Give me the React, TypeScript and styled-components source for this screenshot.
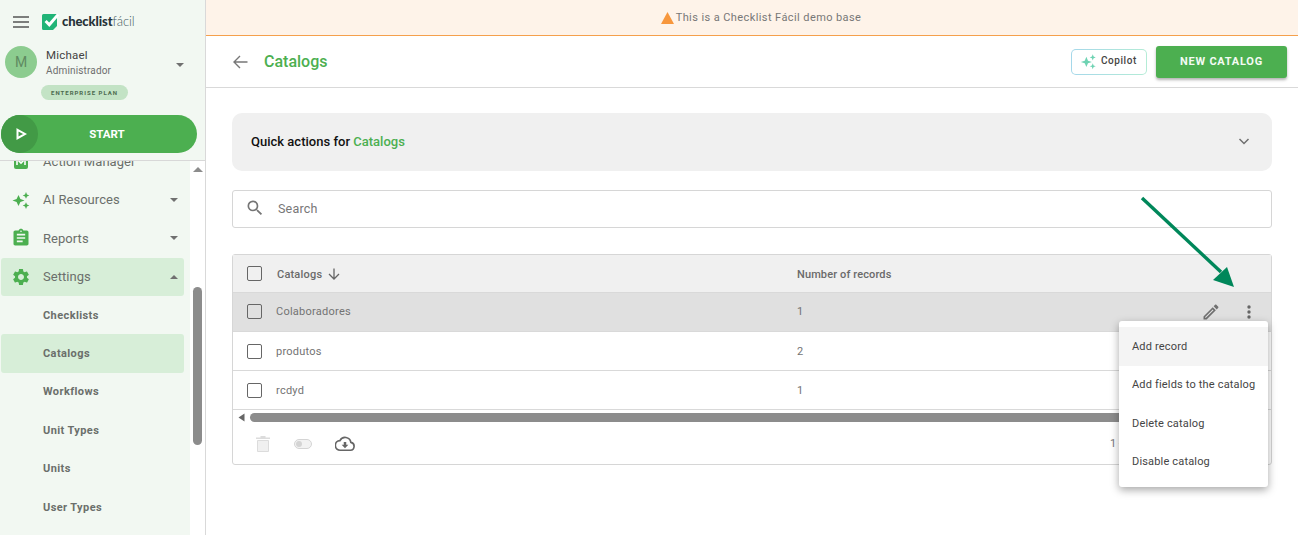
import React from "react";
import styled, { createGlobalStyle } from "styled-components";

const Global = createGlobalStyle`
  html, body { margin: 0; padding: 0; height: 100%; overflow: hidden; background: #fff; }
  body { font-family: Roboto, "Liberation Sans", sans-serif; }
  #root { height: 535px; }
  * { box-sizing: border-box; }
`;

const Page = styled.div`
  position: relative;
  display: flex;
  width: 1298px;
  height: 535px;
  overflow: hidden;
`;

const Sidebar = styled.aside`
  width: 206px;
  height: 535px;
  flex: none;
  display: flex;
  flex-direction: column;
  background: #f2f8f2;
  border-right: 1px solid #d9d9d9;
`;

const SideTop = styled.div`
  height: 161px;
  flex: none;
  border-bottom: 1px solid #d8d8d8;
  display: flex;
  flex-direction: column;
`;

const LogoRow = styled.div`
  height: 40px;
  display: flex;
  align-items: center;
  padding: 3px 0 0 13px;
`;

const Burger = styled.svg`
  width: 16px;
  height: 12px;
  margin-right: 12px;
`;

const LogoText = styled.span`
  margin: -2px 0 0 2px;
  font-family: Lato, sans-serif;
  font-size: 13px;
  font-weight: 900;
  color: #263238;
  letter-spacing: -0.1px;
  b { font-weight: 300; color: #455a64; }
`;

const UserRow = styled.div`
  display: flex;
  align-items: center;
  height: 40px;
  padding: 0 0 0 5px;
  margin-top: 3px;
`;

const Avatar = styled.div`
  width: 32px;
  height: 32px;
  border-radius: 50%;
  background: #8ccc8f;
  color: #5f8a61;
  font-size: 14px;
  display: flex;
  align-items: center;
  justify-content: center;
  margin-right: 9px;
  margin-top: -2px;
`;

const UserText = styled.div`
  flex: 1;
  display: flex;
  flex-direction: column;
  gap: 1px;
`;

const UserName = styled.div`
  font-size: 11.5px;
  line-height: 15px;
  color: #444;
  letter-spacing: 0.2px;
`;

const UserRole = styled.div`
  font-size: 10px;
  line-height: 14px;
  color: #6e6e6e;
  letter-spacing: 0.15px;
`;

const Caret = styled.span<{ $up?: boolean }>`
  width: 0;
  height: 0;
  border-left: 4px solid transparent;
  border-right: 4px solid transparent;
  ${(p) => (p.$up ? "border-bottom: 4px solid #707070;" : "border-top: 4px solid #707070;")}
`;

const UserCaret = styled(Caret)`
  margin: 3px 21px 0 0;
`;

const Plan = styled.div`
  align-self: flex-start;
  margin: 2px 0 0 41px;
  height: 15px;
  width: 87px;
  border-radius: 8px;
  background: #c3e3c5;
  color: #4c6a4e;
  font-size: 6px;
  font-weight: 700;
  letter-spacing: 1px;
  display: flex;
  align-items: center;
  justify-content: center;
`;

const Start = styled.div`
  margin: 15px 0 0 1px;
  width: 196px;
  height: 38px;
  border-radius: 19px;
  background: #4caf50;
  display: flex;
  align-items: center;
  color: #fff;
  font-size: 11.5px;
  font-weight: 700;
`;

const StartCircle = styled.div`
  width: 37px;
  height: 38px;
  border-radius: 50%;
  background: #429a46;
  display: flex;
  align-items: center;
  justify-content: center;
  padding-left: 2px;
`;

const StartLabel = styled.div`
  flex: 1;
  text-align: center;
  padding-right: 21px;
`;

const SideBody = styled.div`
  flex: 1;
  min-height: 0;
  display: flex;
`;

const NavClip = styled.div`
  width: 190px;
  overflow: hidden;
`;

const NavList = styled.nav`
  margin-top: -18.6px;
  display: flex;
  flex-direction: column;
`;

const NavItem = styled.div<{ $active?: boolean; $sub?: boolean }>`
  height: 38.4px;
  margin: 0 6px 0 1px;
  padding: 0 6px 0 10px;
  display: flex;
  align-items: center;
  border-radius: 3px;
  color: #6b6f6b;
  font-size: ${(p) => (p.$sub ? "11px" : "13px")};
  font-weight: ${(p) => (p.$sub ? 700 : 400)};
  letter-spacing: ${(p) => (p.$sub ? "0.4px" : "0.05px")};
  background: ${(p) => (p.$active ? "#d7eed8" : "transparent")};
  ${(p) => p.$sub && "padding-left: 42px;"}
`;

const NavIcon = styled.svg`
  width: 20px;
  height: 20px;
  margin-right: 12px;
  flex: none;
`;

const NavLabel = styled.span`
  flex: 1;
`;

const SideScroll = styled.div`
  width: 15px;
  background: #fff;
  display: flex;
  flex-direction: column;
  align-items: center;
  padding-top: 6px;
`;

const ScrollUp = styled.span`
  width: 0;
  height: 0;
  border-left: 5px solid transparent;
  border-right: 5px solid transparent;
  border-bottom: 5px solid #8c8c8c;
`;

const Thumb = styled.div`
  width: 9px;
  height: 158px;
  margin: 115px 0 0 0;
  border-radius: 5px;
  background: #8c8c8c;
`;

const Main = styled.main`
  flex: 1;
  min-width: 0;
  display: flex;
  flex-direction: column;
`;

const Banner = styled.div`
  height: 36px;
  background: #fef3e9;
  border-bottom: 1px solid #f5a04c;
  display: flex;
  align-items: center;
  justify-content: center;
  gap: 2px;
  color: #777;
  font-size: 11px;
  letter-spacing: 0.41px;
  padding-left: 18px;
`;

const Header = styled.header`
  height: 52px;
  border-bottom: 1px solid #d9d9d9;
  display: flex;
  align-items: center;
  padding: 0 11px 0 26px;
`;

const Title = styled.h1`
  margin: 0 0 0 15px;
  flex: 1;
  font-size: 16px;
  font-weight: 500;
  color: #4caf50;
`;

const Copilot = styled.div`
  width: 76px;
  height: 26px;
  margin-right: 9px;
  border-radius: 5px;
  border: 1px solid transparent;
  background: linear-gradient(#fff, #fff) padding-box, linear-gradient(90deg, #a5d8ea, #b4ecd6) border-box;
  display: flex;
  align-items: center;
  padding-left: 8px;
  gap: 4px;
  color: #444;
  font-size: 10px;
  font-weight: 500;
  letter-spacing: 0.55px;
`;

const CopilotLabel = styled.span`
  margin-top: -3px;
`;

const NewButton = styled.div`
  width: 131px;
  height: 32px;
  border-radius: 3px;
  background: #4caf50;
  box-shadow: 0 2px 3px rgba(0, 0, 0, 0.3);
  color: #f4fbf4;
  font-size: 11px;
  font-weight: 700;
  letter-spacing: 0.75px;
  display: flex;
  align-items: center;
  justify-content: center;
`;

const Content = styled.div`
  flex: 1;
  padding: 25px 26px 0;
  display: flex;
  flex-direction: column;
`;

const Quick = styled.div`
  height: 58px;
  border-radius: 10px;
  background: #f0f0f0;
  display: flex;
  align-items: center;
  justify-content: space-between;
  padding: 0 21px 2px 19px;
  font-size: 13px;
  font-weight: 500;
  letter-spacing: 0.01px;
  color: #111;
  b { font-weight: 500; color: #4caf50; }
`;

const SearchBox = styled.div`
  height: 38px;
  margin-top: 19px;
  border: 1px solid #d6d6d6;
  border-radius: 3px;
  display: flex;
  align-items: center;
  padding: 0 0 2px 12px;
  gap: 13px;
  color: #777;
  font-size: 12.5px;
  letter-spacing: 0.2px;
`;

const Table = styled.div`
  margin-top: 26px;
  height: 211px;
  border: 1px solid #d6d6d6;
  border-radius: 3px;
  display: flex;
  flex-direction: column;
`;

const Row = styled.div<{ $bg?: string; $h?: number; $low?: boolean }>`
  height: ${(p) => p.$h ?? 39}px;
  flex: none;
  background: ${(p) => p.$bg ?? "#fff"};
  border-bottom: 1px solid #d9d9d9;
  display: grid;
  grid-template-columns: 43px 521px 1fr auto;
  align-items: center;
  color: #737373;
  font-size: 11px;
  letter-spacing: 0.25px;
  ${(p) => p.$low && "padding-top: 2px;"}
`;

const Check = styled.span`
  width: 15px;
  height: 15px;
  margin-left: 14px;
  margin-top: -1px;
  border: 1px solid #666;
  border-radius: 2px;
`;

const RowText = styled.span`
  margin-top: -1px;
`;

const HeadCell = styled.span<{ $first?: boolean }>`
  display: flex;
  align-items: center;
  gap: 5px;
  font-weight: 500;
  color: #6a6a6a;
  letter-spacing: 0.12px;
  margin-top: 1px;
  ${(p) => p.$first && "padding-left: 1px; letter-spacing: 0.2px;"}
`;

const RowActions = styled.span`
  display: flex;
  align-items: center;
  gap: 26px;
  padding-right: 20px;
`;

const HBar = styled.div`
  height: 15px;
  flex: none;
  display: flex;
  align-items: center;
  padding-left: 4px;
  gap: 4px;
`;

const HThumb = styled.div`
  width: 1010px;
  height: 9px;
  border-radius: 5px 0 0 5px;
  background: #8c8c8c;
`;

const Footer = styled.div`
  flex: 1;
  display: flex;
  align-items: center;
  padding: 0 0 2px 22px;
  color: #777;
  font-size: 11px;
`;

const FootIcons = styled.div`
  display: flex;
  align-items: center;
  gap: 23px;
  width: 855px;
`;

const Menu = styled.div`
  position: absolute;
  left: 1119px;
  top: 321px;
  width: 149px;
  height: 166px;
  background: #fff;
  border-radius: 3px;
  box-shadow: 0 3px 8px rgba(0, 0, 0, 0.35);
  padding-top: 6px;
  z-index: 3;
`;

const MenuItem = styled.div<{ $active?: boolean }>`
  height: 38.5px;
  padding-left: 13px;
  display: flex;
  align-items: center;
  color: #444;
  font-size: 11px;
  letter-spacing: 0.17px;
  background: ${(p) => (p.$active ? "#f4f4f4" : "transparent")};
`;

const Arrow = styled.svg`
  position: absolute;
  left: 1135px;
  top: 192px;
  width: 105px;
  height: 100px;
  z-index: 2;
`;

const Sparkle = ({ c, s = 20 }: { c: string; s?: number }) => (
  <svg width={s} height={s} viewBox="0 0 20 20" style={{ flex: "none" }}>
    <path fill={c} d="M7.5 4.5 9.4 9 14 10.5 9.4 12 7.5 16.5 5.6 12 1 10.5 5.6 9Z" />
    <path fill={c} d="M15 1.5 16 4.2 18.5 5.2 16 6.2 15 8.9 14 6.2 11.5 5.2 14 4.2Z" />
    <path fill={c} d="M15 12 16 14.6 18.5 15.6 16 16.6 15 19.2 14 16.6 11.5 15.6 14 14.6Z" />
  </svg>
);

const Chevron = () => (
  <svg width="14" height="14" viewBox="0 0 14 14">
    <path d="M2.5 5 7 9.5 11.5 5" fill="none" stroke="#6f6f6f" strokeWidth="1.5" />
  </svg>
);

const rows = [
  { name: "Colaboradores", n: "1", bg: "#e0e0e0" },
  { name: "produtos", n: "2" },
  { name: "rcdyd", n: "1" },
];

export default function App() {
  return (
    <Page>
      <Global />
      <Sidebar>
        <SideTop>
          <LogoRow>
            <Burger viewBox="0 0 16 12">
              <path d="M0 1h16M0 6h16M0 11h16" stroke="#555" strokeWidth="1.3" />
            </Burger>
            <svg width="19" height="19" viewBox="0 0 19 19">
              <path fill="#21b477" d="M2.5 2H16v12l-4 4H2.5A1.5 1.5 0 0 1 1 16.5v-13A1.5 1.5 0 0 1 2.5 2Z" />
              <path d="M4.6 9 8.3 12.8 17 2.6" fill="none" stroke="#fff" strokeWidth="3" />
            </svg>
            <LogoText>
              checklist<b>fácil</b>
            </LogoText>
          </LogoRow>
          <UserRow>
            <Avatar>M</Avatar>
            <UserText>
              <UserName>Michael</UserName>
              <UserRole>Administrador</UserRole>
            </UserText>
            <UserCaret />
          </UserRow>
          <Plan>ENTERPRISE PLAN</Plan>
          <Start>
            <StartCircle>
              <svg width="12" height="12" viewBox="0 0 12 12">
                <path d="M2.5 1.8 10 6 2.5 10.2Z" fill="none" stroke="#fff" strokeWidth="2" />
              </svg>
            </StartCircle>
            <StartLabel>START</StartLabel>
          </Start>
        </SideTop>
        <SideBody>
          <NavClip>
            <NavList>
              <NavItem>
                <NavIcon viewBox="0 0 20 20">
                  <rect x="3" y="3" width="14" height="14" rx="2" fill="#4caf50" />
                  <path d="M6 13V7l4 4 4-4v6" fill="none" stroke="#fff" strokeWidth="1.6" />
                </NavIcon>
                <NavLabel>Action Manager</NavLabel>
              </NavItem>
              <NavItem>
                <NavIcon viewBox="0 0 20 20">
                  <path fill="#4caf50" d="M7.5 5 9.4 9 13.5 10.5 9.4 12 7.5 16 5.6 12 1.5 10.5 5.6 9Z" />
                  <path fill="#4caf50" d="M15 2 16 4.4 18.3 5.4 16 6.4 15 8.8 14 6.4 11.7 5.4 14 4.4Z" />
                  <path fill="#4caf50" d="M15 12.2 16 14.6 18.3 15.6 16 16.6 15 19 14 16.6 11.7 15.6 14 14.6Z" />
                </NavIcon>
                <NavLabel>AI Resources</NavLabel>
                <Caret />
              </NavItem>
              <NavItem>
                <NavIcon viewBox="0 0 24 24">
                  <path
                    fill="#4caf50"
                    d="M19 3h-4.18C14.4 1.84 13.3 1 12 1s-2.4.84-2.82 2H5c-1.1 0-2 .9-2 2v14c0 1.1.9 2 2 2h14c1.1 0 2-.9 2-2V5c0-1.1-.9-2-2-2zm-7 0c.55 0 1 .45 1 1s-.45 1-1 1-1-.45-1-1 .45-1 1-1zm2 14H7v-2h7v2zm3-4H7v-2h10v2zm0-4H7V7h10v2z"
                  />
                </NavIcon>
                <NavLabel>Reports</NavLabel>
                <Caret />
              </NavItem>
              <NavItem $active>
                <NavIcon viewBox="0 0 24 24">
                  <path
                    fill="#4caf50"
                    d="M19.14 12.94c.04-.3.06-.61.06-.94 0-.32-.02-.64-.07-.94l2.03-1.58a.49.49 0 0 0 .12-.61l-1.92-3.32a.488.488 0 0 0-.59-.22l-2.39.96c-.5-.38-1.03-.7-1.62-.94l-.36-2.54a.484.484 0 0 0-.48-.41h-3.84c-.24 0-.43.17-.47.41l-.36 2.54c-.59.24-1.13.57-1.62.94l-2.39-.96c-.22-.08-.47 0-.59.22L2.74 8.87c-.12.21-.08.47.12.61l2.03 1.58c-.05.3-.09.63-.09.94s.02.64.07.94l-2.03 1.58a.49.49 0 0 0-.12.61l1.92 3.32c.12.22.37.29.59.22l2.39-.96c.5.38 1.03.7 1.62.94l.36 2.54c.05.24.24.41.48.41h3.84c.24 0 .44-.17.47-.41l.36-2.54c.59-.24 1.13-.56 1.62-.94l2.39.96c.22.08.47 0 .59-.22l1.92-3.32c.12-.22.07-.47-.12-.61l-2.01-1.58zM12 15.6c-1.98 0-3.6-1.62-3.6-3.6s1.62-3.6 3.6-3.6 3.6 1.62 3.6 3.6-1.62 3.6-3.6 3.6z"
                  />
                </NavIcon>
                <NavLabel>Settings</NavLabel>
                <Caret $up />
              </NavItem>
              <NavItem $sub>Checklists</NavItem>
              <NavItem $sub $active>Catalogs</NavItem>
              <NavItem $sub>Workflows</NavItem>
              <NavItem $sub>Unit Types</NavItem>
              <NavItem $sub>Units</NavItem>
              <NavItem $sub>User Types</NavItem>
            </NavList>
          </NavClip>
          <SideScroll>
            <ScrollUp />
            <Thumb />
          </SideScroll>
        </SideBody>
      </Sidebar>
      <Main>
        <Banner>
          <svg width="13" height="12" viewBox="0 0 13 12">
            <path d="M6.5 0 13 12H0Z" fill="#f7973d" />
          </svg>
          This is a Checklist Fácil demo base
        </Banner>
        <Header>
          <svg width="17" height="16" viewBox="0 0 17 16">
            <path d="M15.5 8H2M8 2 2 8l6 6" fill="none" stroke="#777" strokeWidth="1.4" />
          </svg>
          <Title>Catalogs</Title>
          <Copilot>
            <Sparkle c="#6fd3b3" s={17} />
            <CopilotLabel>Copilot</CopilotLabel>
          </Copilot>
          <NewButton>NEW CATALOG</NewButton>
        </Header>
        <Content>
          <Quick>
            <span>
              Quick actions for <b>Catalogs</b>
            </span>
            <Chevron />
          </Quick>
          <SearchBox>
            <svg width="20" height="20" viewBox="0 0 24 24">
              <path
                fill="#757575"
                d="M15.5 14h-.79l-.28-.27A6.47 6.47 0 0 0 16 9.5 6.5 6.5 0 1 0 9.5 16c1.61 0 3.09-.59 4.23-1.57l.27.28v.79l5 4.99L20.49 19l-4.99-5zm-6 0C7.01 14 5 11.99 5 9.5S7.01 5 9.5 5 14 7.01 14 9.5 11.99 14 9.5 14z"
              />
            </svg>
            Search
          </SearchBox>
          <Table>
            <Row $bg="#f0f0f0" $h={38}>
              <Check />
              <HeadCell $first>
                Catalogs
                <svg width="14" height="14" viewBox="0 0 14 14">
                  <path d="M7 1.5V12M2 7l5 5 5-5" fill="none" stroke="#666" strokeWidth="1.3" />
                </svg>
              </HeadCell>
              <HeadCell>Number of records</HeadCell>
            </Row>
            {rows.map((r, i) => (
              <Row key={r.name} $bg={r.bg} $low={i > 0}>
                <Check />
                <RowText>{r.name}</RowText>
                <RowText>{r.n}</RowText>
                {i === 0 && (
                  <RowActions>
                    <svg width="20" height="20" viewBox="0 0 24 24">
                      <path
                        fill="#707070"
                        d="M14.06 9.02l.92.92L5.92 19H5v-.92l9.06-9.06M17.66 3c-.25 0-.51.1-.7.29l-1.83 1.83 3.75 3.75 1.83-1.83c.39-.39.39-1.02 0-1.41l-2.34-2.34c-.2-.2-.45-.29-.71-.29zm-3.6 3.19L3 17.25V21h3.75L17.81 9.94l-3.75-3.75z"
                      />
                    </svg>
                    <svg width="4" height="14" viewBox="0 0 4 14">
                      <circle cx="2" cy="2" r="1.7" fill="#666" />
                      <circle cx="2" cy="7" r="1.7" fill="#666" />
                      <circle cx="2" cy="12" r="1.7" fill="#666" />
                    </svg>
                  </RowActions>
                )}
              </Row>
            ))}
            <HBar>
              <svg width="9" height="9" viewBox="0 0 9 9">
                <path d="M7.5 0.5v8L1.5 4.5Z" fill="#666" />
              </svg>
              <HThumb />
            </HBar>
            <Footer>
              <FootIcons>
                <svg width="16" height="18" viewBox="0 0 16 18">
                  <path d="M2.5 5.5h11v11h-11Z" fill="#f0f0f0" stroke="#dcdcdc" />
                  <path d="M1 2.5h14V4H1ZM5.5 1h5v1.5h-5Z" fill="#dcdcdc" />
                </svg>
                <svg width="18" height="10" viewBox="0 0 18 10">
                  <rect x="0.5" y="0.5" width="17" height="9" rx="4.5" fill="#f2f2f2" stroke="#d4d4d4" />
                  <circle cx="5" cy="5" r="3" fill="#d4d4d4" />
                </svg>
                <svg width="20" height="16" viewBox="0 0 24 19">
                  <path
                    d="M19 7.5A7 7 0 0 0 5.9 5.4 5.8 5.8 0 0 0 6.5 17h12a4.8 4.8 0 0 0 .5-9.5Z"
                    fill="none"
                    stroke="#666"
                    strokeWidth="2"
                  />
                  <path d="M10.5 7h3v3.5H16L12 14.5 8 10.5h2.5Z" fill="#666" />
                </svg>
              </FootIcons>
              <span>1 -</span>
            </Footer>
          </Table>
        </Content>
      </Main>
      <Arrow viewBox="0 0 105 100">
        <path d="M7 6 86 80" stroke="#00875a" strokeWidth="3.4" fill="none" />
        <path d="M99 95 78 88 92 75Z" fill="#00875a" />
      </Arrow>
      <Menu>
        <MenuItem $active>Add record</MenuItem>
        <MenuItem>Add fields to the catalog</MenuItem>
        <MenuItem>Delete catalog</MenuItem>
        <MenuItem>Disable catalog</MenuItem>
      </Menu>
    </Page>
  );
}
